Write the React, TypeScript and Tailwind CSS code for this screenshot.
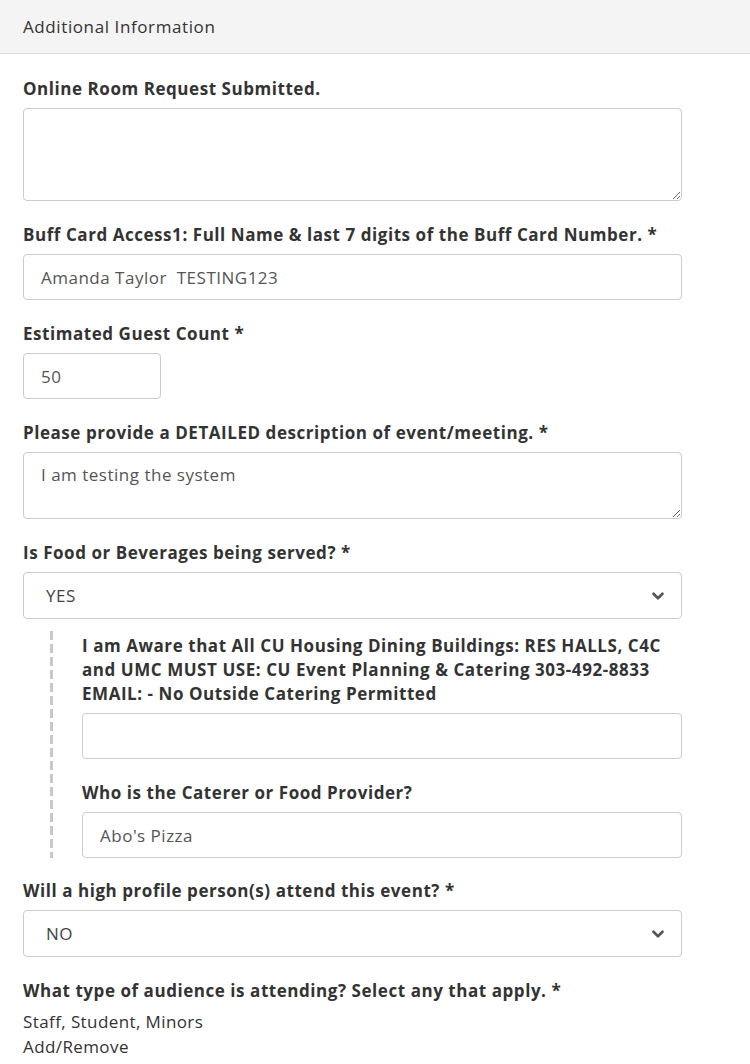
import { ChevronDown } from "lucide-react";

const font = { fontFamily: '"Open Sans", "Liberation Sans", sans-serif' };

function Label({ children }: { children: React.ReactNode }) {
  return (
    <div className="mb-[7px] text-[17px] font-bold leading-6 tracking-[0.55px] text-[#333]">
      {children}
    </div>
  );
}

function TextInput({ value, className = "" }: { value?: string; className?: string }) {
  return (
    <input
      readOnly
      value={value ?? ""}
      className={`h-[46px] rounded border border-[#ccc] bg-white px-[17px] text-[17px] tracking-[0.5px] text-[#555] outline-none ${className}`}
    />
  );
}

function Select({ value }: { value: string }) {
  return (
    <div className="flex h-[47px] w-full items-center justify-between rounded border border-[#ccc] bg-white pl-[22px] pr-[14px] text-[17px] tracking-[0.5px] text-[#444]">
      <span>{value}</span>
      <ChevronDown className="h-[18px] w-[18px] text-[#555]" strokeWidth={3.5} />
    </div>
  );
}

export default function App() {
  return (
    <div className="min-h-[1064px] w-[750px] bg-white" style={font}>
      <div className="flex h-[54px] items-center border-b border-[#ddd] bg-[#f4f4f4] px-[23px] text-[17px] tracking-[0.6px] text-[#333]">
        Additional Information
      </div>

      <div className="w-[682px] pl-[23px] pt-[23px]">
        <div className="mb-[22px]">
          <Label>Online Room Request Submitted.</Label>
          <textarea
            readOnly
            className="block h-[93px] w-full resize-y rounded border border-[#ccc] bg-white px-[17px] py-[10px] text-[17px] text-[#555] outline-none"
          />
        </div>

        <div className="mb-[22px]">
          <Label>Buff Card Access1: Full Name &amp; last 7 digits of the Buff Card Number. *</Label>
          <TextInput value="Amanda Taylor  TESTING123" className="w-full" />
        </div>

        <div className="mb-[22px]">
          <Label>Estimated Guest Count *</Label>
          <TextInput value="50" className="w-[138px]" />
        </div>

        <div className="mb-[22px]">
          <Label>Please provide a DETAILED description of event/meeting. *</Label>
          <textarea
            readOnly
            value="I am testing the system"
            className="block h-[67px] w-full resize-y rounded border border-[#ccc] bg-white px-[17px] py-[10px] text-[17px] leading-6 tracking-[0.5px] text-[#555] outline-none"
          />
        </div>

        <div className="mb-[12px]">
          <Label>Is Food or Beverages being served? *</Label>
          <Select value="YES" />
        </div>

        <div className="flex">
          <div className="ml-[27px] mr-[29px] w-[3px] bg-[repeating-linear-gradient(to_bottom,#c8c8c8_0px,#c8c8c8_9px,transparent_9px,transparent_13px)]" />
          <div className="flex-1 pt-[3px]">
            <div className="mb-[22px]">
              <Label>
                I am Aware that All CU Housing Dining Buildings: RES HALLS, C4C
                <br />
                and UMC MUST USE: CU Event Planning &amp; Catering 303-492-8833
                <br />
                EMAIL: - No Outside Catering Permitted
              </Label>
              <TextInput className="w-full" />
            </div>
            <div>
              <Label>Who is the Caterer or Food Provider?</Label>
              <TextInput value="Abo's Pizza" className="w-full" />
            </div>
          </div>
        </div>

        <div className="mb-[22px] mt-[21px]">
          <Label>Will a high profile person(s) attend this event? *</Label>
          <Select value="NO" />
        </div>

        <div>
          <div className="mb-[6px] text-[17px] font-bold leading-6 tracking-[0.55px] text-[#333]">
            What type of audience is attending? Select any that apply. *
          </div>
          <div className="text-[17px] leading-[25px] tracking-[0.4px] text-[#333]">
            Staff, Student, Minors
          </div>
          <div className="text-[17px] leading-[25px] tracking-[0.4px] text-[#333]">Add/Remove</div>
        </div>
      </div>
    </div>
  );
}
